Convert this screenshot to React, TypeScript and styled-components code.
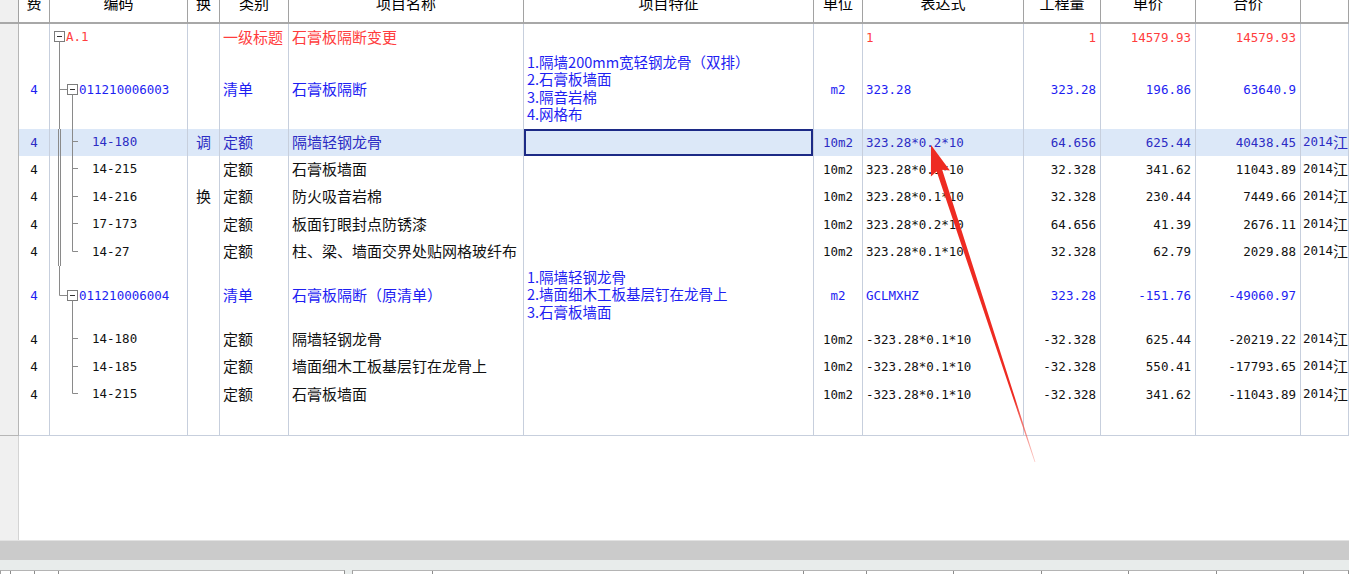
import React from 'react';
import styled, { createGlobalStyle, css } from 'styled-components';

const GlobalStyle = createGlobalStyle`
  * { box-sizing: border-box; }
  html, body { margin: 0; padding: 0; background: #fff; overflow: hidden; }
  body { font-family: "Noto Sans CJK SC", "Noto Sans", sans-serif; }
`;

const COLS = '19px 31px 138px 32px 69px 235px 290px 49px 161px 77px 95px 105px 1fr';
const CJK = '"Noto Sans CJK SC", "Noto Sans", sans-serif';
const MONO = '"DejaVu Sans Mono", "Liberation Mono", monospace';

type Tone = 'red' | 'blue' | 'black' | 'sel';
type Rail = 'none' | 'full' | 'top';

const toneColor: Record<Tone, string> = {
  red: '#ff3d3d',
  blue: '#1e1ef2',
  black: '#111111',
  sel: '#2c2cc4',
};

const Page = styled.div`
  position: relative;
  width: 1349px;
  height: 574px;
  overflow: hidden;
  display: flex;
  flex-direction: column;
  background: #fff;
`;

const Table = styled.div`
  display: flex;
  flex-direction: column;
  flex: none;
`;

const HeaderRow = styled.div`
  display: grid;
  grid-template-columns: ${COLS};
  height: 24px;
  background: #fff;
`;

const HeadCell = styled.div<{ $gutter?: boolean }>`
  display: flex;
  justify-content: center;
  align-items: flex-start;
  overflow: hidden;
  white-space: nowrap;
  border-right: 1px solid #a2a2a2;
  border-bottom: 2px solid #a8a8a8;
  background: ${(p) => (p.$gutter ? '#f0f0f0' : '#fff')};
  font-family: ${CJK};
  font-size: 15px;
  line-height: 15px;
  color: #000;
`;

const HeadText = styled.span`
  margin-top: -5px;
`;

const Row = styled.div<{ $h: number; $sel?: boolean; $tone: Tone }>`
  display: grid;
  grid-template-columns: ${COLS};
  height: ${(p) => p.$h}px;
  background: ${(p) => (p.$sel ? '#dce8f8' : '#fff')};
  color: ${(p) => toneColor[p.$tone]};
`;

const Gutter = styled.div`
  background: #f0f0f0;
  border-right: 1px solid #b6b6b6;
  border-bottom: 1px solid #b6b6b6;
`;

const Cell = styled.div<{
  $align?: 'left' | 'center' | 'right';
  $mono?: boolean;
  $top?: boolean;
  $focus?: boolean;
}>`
  display: flex;
  align-items: ${(p) => (p.$top ? 'flex-start' : 'center')};
  justify-content: ${(p) =>
    p.$align === 'center' ? 'center' : p.$align === 'right' ? 'flex-end' : 'flex-start'};
  padding-top: ${(p) => (p.$top ? '2px' : '0')};
  padding-bottom: ${(p) => (p.$top ? '0' : p.$mono ? '1px' : '3px')};
  padding-left: ${(p) => (p.$align === 'left' || !p.$align ? '3px' : '0')};
  padding-right: ${(p) => (p.$align === 'right' ? '4px' : '0')};
  border-right: 1px solid #c7cfdd;
  border-bottom: 1px solid #c7cfdd;
  overflow: hidden;
  white-space: nowrap;
  min-width: 0;
  font-family: ${(p) => (p.$mono ? MONO : CJK)};
  font-size: ${(p) => (p.$mono ? '12.5px' : '15px')};
  line-height: 17px;
  ${(p) =>
    p.$focus &&
    css`
      box-shadow: inset 0 0 0 2px #1c2a86;
    `}
`;

const CodeCell = styled.div`
  display: flex;
  align-items: center;
  border-right: 1px solid #c7cfdd;
  border-bottom: 1px solid #c7cfdd;
  white-space: nowrap;
  min-width: 0;
  font-family: ${MONO};
  font-size: 12.5px;
  line-height: 17px;
`;

const CodeText = styled.span`
  margin-top: -2px;
`;

const TreeSvg = styled.svg`
  flex: none;
  align-self: flex-start;
  display: block;
  overflow: visible;
`;

const Lines = styled.div`
  display: flex;
  flex-direction: column;
  font-size: 14.5px;
  line-height: 17.4px;
`;

const ExtraCell = styled(Cell)`
  padding-left: 2px;
`;

const Mono = styled.span`
  font-family: ${MONO};
  font-size: 12.5px;
`;

const Filler = styled.div`
  flex: none;
  height: 104px;
  display: flex;
`;

const FillerGutter = styled.div`
  width: 19px;
  background: #f0f0f0;
  border-right: 1px solid #d4d4d4;
`;

const ScrollBand = styled.div`
  flex: none;
  height: 20px;
  background: #cbcbcb;
  border-top: 1px solid #e2e2e2;
`;

const LightBand = styled.div`
  flex: none;
  height: 10px;
  background: #e8eceb;
`;

const BottomStrip = styled.div`
  flex: none;
  height: 4px;
  display: flex;
  gap: 7px;
  background: #e8eceb;
`;

const Panel = styled.div<{ $w?: number }>`
  display: flex;
  ${(p) => (p.$w ? `width: ${p.$w}px; flex: none;` : 'flex: 1;')}
  background: #fff;
  border-top: 1px solid #b4b4b4;
  border-left: 1px solid #a0a0a0;
  border-right: 1px solid #909090;
`;

const Seg = styled.div<{ $w: number }>`
  flex: none;
  width: ${(p) => p.$w}px;
  border-right: 1px solid #8c8c8c;
`;

const ArrowLayer = styled.svg`
  position: absolute;
  left: 0;
  top: 0;
  width: 1349px;
  height: 574px;
  pointer-events: none;
`;

interface TreeProps {
  level: 0 | 1 | 2;
  h: number;
  r0?: Rail;
  r1?: Rail;
  dbl?: boolean;
}

function TreeGlyph({ level, h, r0 = 'none', r1 = 'none', dbl }: TreeProps) {
  const c = Math.floor(h / 2) - 1;
  const yc = c + 0.5;
  const w = level === 0 ? 16 : level === 1 ? 29 : 42;
  const line = '#8a8a8a';
  const rail = (x: number, kind: Rail, key: string) => {
    if (kind === 'none') return null;
    const y2 = kind === 'full' ? h : yc;
    return <line key={key} x1={x} y1={0} x2={x} y2={y2} stroke={line} strokeWidth={1} />;
  };
  const box = (x: number, key: string) => (
    <g key={key}>
      <rect x={x + 0.5} y={c - 4.5} width={10} height={10} fill="#fff" stroke="#7c7c7c" strokeWidth={1} />
      <line x1={x + 3} y1={yc} x2={x + 8} y2={yc} stroke="#333" strokeWidth={1} />
    </g>
  );
  const parts: React.ReactNode[] = [];
  if (level === 0) {
    parts.push(box(4, 'b0'));
    parts.push(<line key="d0" x1={9.5} y1={c + 5.5} x2={9.5} y2={h} stroke={line} />);
  } else if (level === 1) {
    parts.push(rail(9.5, r0, 'r0'));
    parts.push(<line key="h" x1={9.5} y1={yc} x2={17} y2={yc} stroke={line} />);
    parts.push(box(17, 'b1'));
    parts.push(<line key="d1" x1={22.5} y1={c + 5.5} x2={22.5} y2={h} stroke={line} />);
  } else {
    if (r0 !== 'none') {
      if (dbl) {
        parts.push(rail(8.5, r0, 'r0a'));
        parts.push(rail(10.5, r0, 'r0b'));
      } else {
        parts.push(rail(9.5, r0, 'r0'));
      }
    }
    parts.push(rail(22.5, r1, 'r1'));
    parts.push(<line key="t" x1={22.5} y1={yc} x2={28} y2={yc} stroke={line} />);
  }
  return (
    <TreeSvg width={w} height={h} viewBox={`0 0 ${w} ${h}`}>
      {parts}
    </TreeSvg>
  );
}

interface RowData {
  h: number;
  tone: Tone;
  sel?: boolean;
  fee?: string;
  level: 0 | 1 | 2;
  r0?: Rail;
  r1?: Rail;
  dbl?: boolean;
  code: string;
  huan?: string;
  type: string;
  name: string;
  feature?: string[];
  unit?: string;
  expr?: string;
  qty?: string;
  price?: string;
  total?: string;
  extra?: boolean;
}

const rows: RowData[] = [
  {
    h: 27, tone: 'red', level: 0, code: 'A.1', type: '一级标题', name: '石膏板隔断变更',
    expr: '1', qty: '1', price: '14579.93', total: '14579.93',
  },
  {
    h: 78, tone: 'blue', fee: '4', level: 1, r0: 'full', code: '011210006003', type: '清单', name: '石膏板隔断',
    feature: ['1.隔墙200mm宽轻钢龙骨（双排）', '2.石膏板墙面', '3.隔音岩棉', '4.网格布'],
    unit: 'm2', expr: '323.28', qty: '323.28', price: '196.86', total: '63640.9',
  },
  {
    h: 27, tone: 'sel', sel: true, fee: '4', level: 2, r0: 'full', r1: 'full', dbl: true, code: '14-180', huan: '调',
    type: '定额', name: '隔墙轻钢龙骨', unit: '10m2', expr: '323.28*0.2*10', qty: '64.656', price: '625.44',
    total: '40438.45', extra: true,
  },
  {
    h: 27, tone: 'black', fee: '4', level: 2, r0: 'full', r1: 'full', dbl: true, code: '14-215', type: '定额',
    name: '石膏板墙面', unit: '10m2', expr: '323.28*0.1*10', qty: '32.328', price: '341.62', total: '11043.89', extra: true,
  },
  {
    h: 28, tone: 'black', fee: '4', level: 2, r0: 'full', r1: 'full', dbl: true, code: '14-216', huan: '换', type: '定额',
    name: '防火吸音岩棉', unit: '10m2', expr: '323.28*0.1*10', qty: '32.328', price: '230.44', total: '7449.66', extra: true,
  },
  {
    h: 27, tone: 'black', fee: '4', level: 2, r0: 'full', r1: 'full', dbl: true, code: '17-173', type: '定额',
    name: '板面钉眼封点防锈漆', unit: '10m2', expr: '323.28*0.2*10', qty: '64.656', price: '41.39', total: '2676.11', extra: true,
  },
  {
    h: 28, tone: 'black', fee: '4', level: 2, r0: 'full', r1: 'top', dbl: true, code: '14-27', type: '定额',
    name: '柱、梁、墙面交界处贴网格玻纤布', unit: '10m2', expr: '323.28*0.1*10', qty: '32.328', price: '62.79',
    total: '2029.88', extra: true,
  },
  {
    h: 60, tone: 'blue', fee: '4', level: 1, r0: 'top', code: '011210006004', type: '清单', name: '石膏板隔断（原清单）',
    feature: ['1.隔墙轻钢龙骨', '2.墙面细木工板基层钉在龙骨上', '3.石膏板墙面'],
    unit: 'm2', expr: 'GCLMXHZ', qty: '323.28', price: '-151.76', total: '-49060.97',
  },
  {
    h: 27, tone: 'black', fee: '4', level: 2, r1: 'full', code: '14-180', type: '定额', name: '隔墙轻钢龙骨',
    unit: '10m2', expr: '-323.28*0.1*10', qty: '-32.328', price: '625.44', total: '-20219.22', extra: true,
  },
  {
    h: 28, tone: 'black', fee: '4', level: 2, r1: 'full', code: '14-185', type: '定额', name: '墙面细木工板基层钉在龙骨上',
    unit: '10m2', expr: '-323.28*0.1*10', qty: '-32.328', price: '550.41', total: '-17793.65', extra: true,
  },
  {
    h: 27, tone: 'black', fee: '4', level: 2, r1: 'top', code: '14-215', type: '定额', name: '石膏板墙面',
    unit: '10m2', expr: '-323.28*0.1*10', qty: '-32.328', price: '341.62', total: '-11043.89', extra: true,
  },
];

const headers = ['费', '编码', '换', '类别', '项目名称', '项目特征', '单位', '表达式', '工程量', '单价', '合价', ''];

function DataRow({ r }: { r: RowData }) {
  return (
    <Row $h={r.h} $sel={r.sel} $tone={r.tone}>
      <Gutter />
      <Cell $align="center" $mono>{r.fee}</Cell>
      <CodeCell>
        <TreeGlyph level={r.level} h={r.h} r0={r.r0} r1={r.r1} dbl={r.dbl} />
        <CodeText>{r.code}</CodeText>
      </CodeCell>
      <Cell $align="center">{r.huan}</Cell>
      <Cell>{r.type}</Cell>
      <Cell>{r.name}</Cell>
      {r.feature ? (
        <Cell $top>
          <Lines>
            {r.feature.map((f) => (
              <span key={f}>{f}</span>
            ))}
          </Lines>
        </Cell>
      ) : (
        <Cell $focus={r.sel} />
      )}
      <Cell $align="center" $mono>{r.unit}</Cell>
      <Cell $mono>{r.expr}</Cell>
      <Cell $align="right" $mono>{r.qty}</Cell>
      <Cell $align="right" $mono>{r.price}</Cell>
      <Cell $align="right" $mono>{r.total}</Cell>
      <ExtraCell>
        {r.extra && (
          <>
            <Mono>2014</Mono>江苏省建筑与装饰工程计价定额
          </>
        )}
      </ExtraCell>
    </Row>
  );
}

function EmptyRow({ h }: { h: number }) {
  return (
    <Row $h={h} $tone="black">
      <Gutter />
      {headers.map((_, i) => (
        <Cell key={i} />
      ))}
    </Row>
  );
}

function Arrow() {
  const T = { x: 931, y: 145 };
  const E = { x: 1035, y: 462 };
  const dx = E.x - T.x;
  const dy = E.y - T.y;
  const len = Math.hypot(dx, dy);
  const u = { x: dx / len, y: dy / len };
  const n = { x: u.y, y: -u.x };
  const B = { x: T.x + 30 * u.x, y: T.y + 30 * u.y };
  const hw = 10;
  const sw = 2.9;
  const pts = [
    [T.x, T.y],
    [B.x + hw * n.x, B.y + hw * n.y],
    [B.x + sw * n.x - 3 * u.x, B.y + sw * n.y - 3 * u.y],
    [E.x + 0.4 * n.x, E.y + 0.4 * n.y],
    [E.x - 0.4 * n.x, E.y - 0.4 * n.y],
    [B.x - sw * n.x - 3 * u.x, B.y - sw * n.y - 3 * u.y],
    [B.x - hw * n.x, B.y - hw * n.y],
  ]
    .map(([x, y]) => `${x.toFixed(1)},${y.toFixed(1)}`)
    .join(' ');
  return (
    <ArrowLayer viewBox="0 0 1349 574">
      <defs>
        <linearGradient id="arrowFade" gradientUnits="userSpaceOnUse" x1={T.x} y1={T.y} x2={E.x} y2={E.y}>
          <stop offset="0" stopColor="#ee2b22" stopOpacity="1" />
          <stop offset="0.8" stopColor="#ee2b22" stopOpacity="1" />
          <stop offset="1" stopColor="#f36a60" stopOpacity="0.35" />
        </linearGradient>
      </defs>
      <polygon points={pts} fill="url(#arrowFade)" />
    </ArrowLayer>
  );
}

export default function App() {
  return (
    <>
      <GlobalStyle />
      <Page>
        <Table>
          <HeaderRow>
            <HeadCell $gutter />
            {headers.map((h, i) => (
              <HeadCell key={i}>
                <HeadText>{h}</HeadText>
              </HeadCell>
            ))}
          </HeaderRow>
          {rows.map((r, i) => (
            <DataRow key={i} r={r} />
          ))}
          <EmptyRow h={28} />
        </Table>
        <Filler>
          <FillerGutter />
        </Filler>
        <ScrollBand />
        <LightBand />
        <BottomStrip>
          <Panel $w={345}>
            <Seg $w={10} />
            <Seg $w={24} />
            <Seg $w={24} />
          </Panel>
          <Panel>
            <Seg $w={80} />
            <Seg $w={371} />
            <Seg $w={63} />
            <Seg $w={87} />
            <Seg $w={88} />
            <Seg $w={87} />
            <Seg $w={88} />
            <Seg $w={87} />
          </Panel>
        </BottomStrip>
        <Arrow />
      </Page>
    </>
  );
}
